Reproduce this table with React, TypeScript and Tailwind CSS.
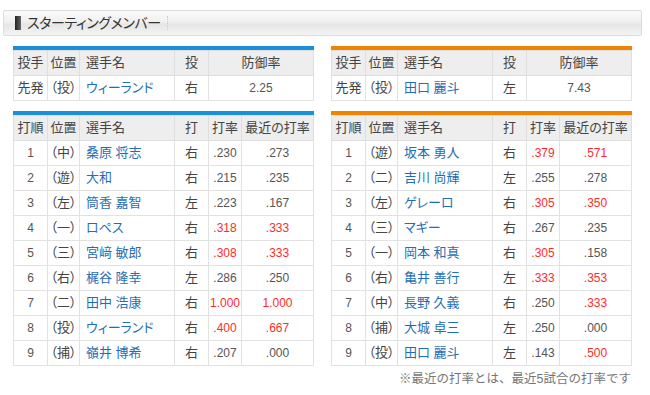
import React from "react";

type Batter = {
  order: number;
  pos: string;
  name: string;
  hand: string;
  avg: string;
  recent: string;
};

type Team = {
  color: string;
  pitcher: { name: string; hand: string; era: string };
  lineup: Batter[];
};

const teams: Team[] = [
  {
    color: "bg-[#1a90d9]",
    pitcher: { name: "ウィーランド", hand: "右", era: "2.25" },
    lineup: [
      { order: 1, pos: "中", name: "桑原 将志", hand: "右", avg: ".230", recent: ".273" },
      { order: 2, pos: "遊", name: "大和", hand: "右", avg: ".215", recent: ".235" },
      { order: 3, pos: "左", name: "筒香 嘉智", hand: "左", avg: ".223", recent: ".167" },
      { order: 4, pos: "一", name: "ロペス", hand: "右", avg: ".318", recent: ".333" },
      { order: 5, pos: "三", name: "宮﨑 敏郎", hand: "右", avg: ".308", recent: ".333" },
      { order: 6, pos: "右", name: "梶谷 隆幸", hand: "左", avg: ".286", recent: ".250" },
      { order: 7, pos: "二", name: "田中 浩康", hand: "右", avg: "1.000", recent: "1.000" },
      { order: 8, pos: "投", name: "ウィーランド", hand: "右", avg: ".400", recent: ".667" },
      { order: 9, pos: "捕", name: "嶺井 博希", hand: "右", avg: ".207", recent: ".000" },
    ],
  },
  {
    color: "bg-[#f08300]",
    pitcher: { name: "田口 麗斗", hand: "左", era: "7.43" },
    lineup: [
      { order: 1, pos: "遊", name: "坂本 勇人", hand: "右", avg: ".379", recent: ".571" },
      { order: 2, pos: "二", name: "吉川 尚輝", hand: "左", avg: ".255", recent: ".278" },
      { order: 3, pos: "左", name: "ゲレーロ", hand: "右", avg: ".305", recent: ".350" },
      { order: 4, pos: "三", name: "マギー", hand: "右", avg: ".267", recent: ".235" },
      { order: 5, pos: "一", name: "岡本 和真", hand: "右", avg: ".305", recent: ".158" },
      { order: 6, pos: "右", name: "亀井 善行", hand: "左", avg: ".333", recent: ".353" },
      { order: 7, pos: "中", name: "長野 久義", hand: "右", avg: ".250", recent: ".333" },
      { order: 8, pos: "捕", name: "大城 卓三", hand: "左", avg: ".250", recent: ".000" },
      { order: 9, pos: "投", name: "田口 麗斗", hand: "左", avg: ".143", recent: ".500" },
    ],
  },
];

// 3割以上は赤
const hot = (v: string) => parseFloat(v) >= 0.3;

const th = "h-[25px] border border-[#dedede] bg-[#eeeeee] font-normal text-center p-0";
const td = "h-[25px] border border-[#e2e2e2] bg-white text-center p-0";

function PitcherTable({ team }: { team: Team }) {
  return (
    <div className="w-[301px]">
      <div className={`h-[4px] ${team.color}`} />
      <table className="w-full table-fixed border-collapse text-[13px] text-[#444]">
        <colgroup>
          <col className="w-[34px]" />
          <col className="w-[32px]" />
          <col className="w-[95px]" />
          <col className="w-[34px]" />
          <col />
        </colgroup>
        <thead>
          <tr>
            <th className={th}>投手</th>
            <th className={th}>位置</th>
            <th className={`${th} !text-left pl-[6px]`}>選手名</th>
            <th className={th}>投</th>
            <th className={th}>防御率</th>
          </tr>
        </thead>
        <tbody>
          <tr>
            <td className={td}>先発</td>
            <td className={td}>（投）</td>
            <td className={`${td} !text-left pl-[6px] text-[#1f6eb5]`}>{team.pitcher.name}</td>
            <td className={td}>{team.pitcher.hand}</td>
            <td className={`${td} text-[12px] text-[#555]`}>{team.pitcher.era}</td>
          </tr>
        </tbody>
      </table>
    </div>
  );
}

function LineupTable({ team }: { team: Team }) {
  return (
    <div className="w-[301px]">
      <div className={`h-[4px] ${team.color}`} />
      <table className="w-full table-fixed border-collapse text-[13px] text-[#444]">
        <colgroup>
          <col className="w-[34px]" />
          <col className="w-[32px]" />
          <col className="w-[95px]" />
          <col className="w-[34px]" />
          <col className="w-[33px]" />
          <col />
        </colgroup>
        <thead>
          <tr>
            <th className={th}>打順</th>
            <th className={th}>位置</th>
            <th className={`${th} !text-left pl-[6px]`}>選手名</th>
            <th className={th}>打</th>
            <th className={th}>打率</th>
            <th className={th}>最近の打率</th>
          </tr>
        </thead>
        <tbody>
          {team.lineup.map((b) => (
            <tr key={b.order}>
              <td className={`${td} text-[12px] text-[#555]`}>{b.order}</td>
              <td className={td}>（{b.pos}）</td>
              <td className={`${td} !text-left pl-[6px] text-[#1f6eb5]`}>{b.name}</td>
              <td className={td}>{b.hand}</td>
              <td className={`${td} text-[12px] ${hot(b.avg) ? "text-[#ff2b2b]" : "text-[#555]"}`}>{b.avg}</td>
              <td className={`${td} text-[12px] ${hot(b.recent) ? "text-[#ff2b2b]" : "text-[#555]"}`}>{b.recent}</td>
            </tr>
          ))}
        </tbody>
      </table>
    </div>
  );
}

export default function App() {
  return (
    <div className="w-[650px] h-[395px] bg-white pt-[10px] px-[3px] font-['Liberation_Sans','Noto_Sans_CJK_JP',sans-serif] [font-feature-settings:'palt']">
      <div className="w-[639px] h-[26px] flex items-center rounded-[2px] border border-[#dcdcdc] bg-[linear-gradient(#fafafa,#f0f0f0_45%,#e6e6e6_55%,#f3f3f3)]">
        <div className="ml-[11px] w-[6px] h-[14px] bg-[linear-gradient(90deg,#222,#666)]" />
        <span className="ml-[6px] text-[14px] tracking-[-0.4px] text-[#333] leading-none">スターティングメンバー</span>
        <div className="ml-[6px] h-[14px] border-l border-dotted border-[#c8c8c8]" />
      </div>

      <div className="mt-[10px] px-[10px] flex justify-between w-[639px]">
        {teams.map((t, i) => (
          <PitcherTable key={i} team={t} />
        ))}
      </div>

      <div className="mt-[10px] px-[10px] flex justify-between w-[639px]">
        {teams.map((t, i) => (
          <LineupTable key={i} team={t} />
        ))}
      </div>

      <div className="mt-[4px] w-[628px] text-right text-[12.5px] text-[#777] [font-feature-settings:normal]">
        ※最近の打率とは、最近5試合の打率です
      </div>
    </div>
  );
}
